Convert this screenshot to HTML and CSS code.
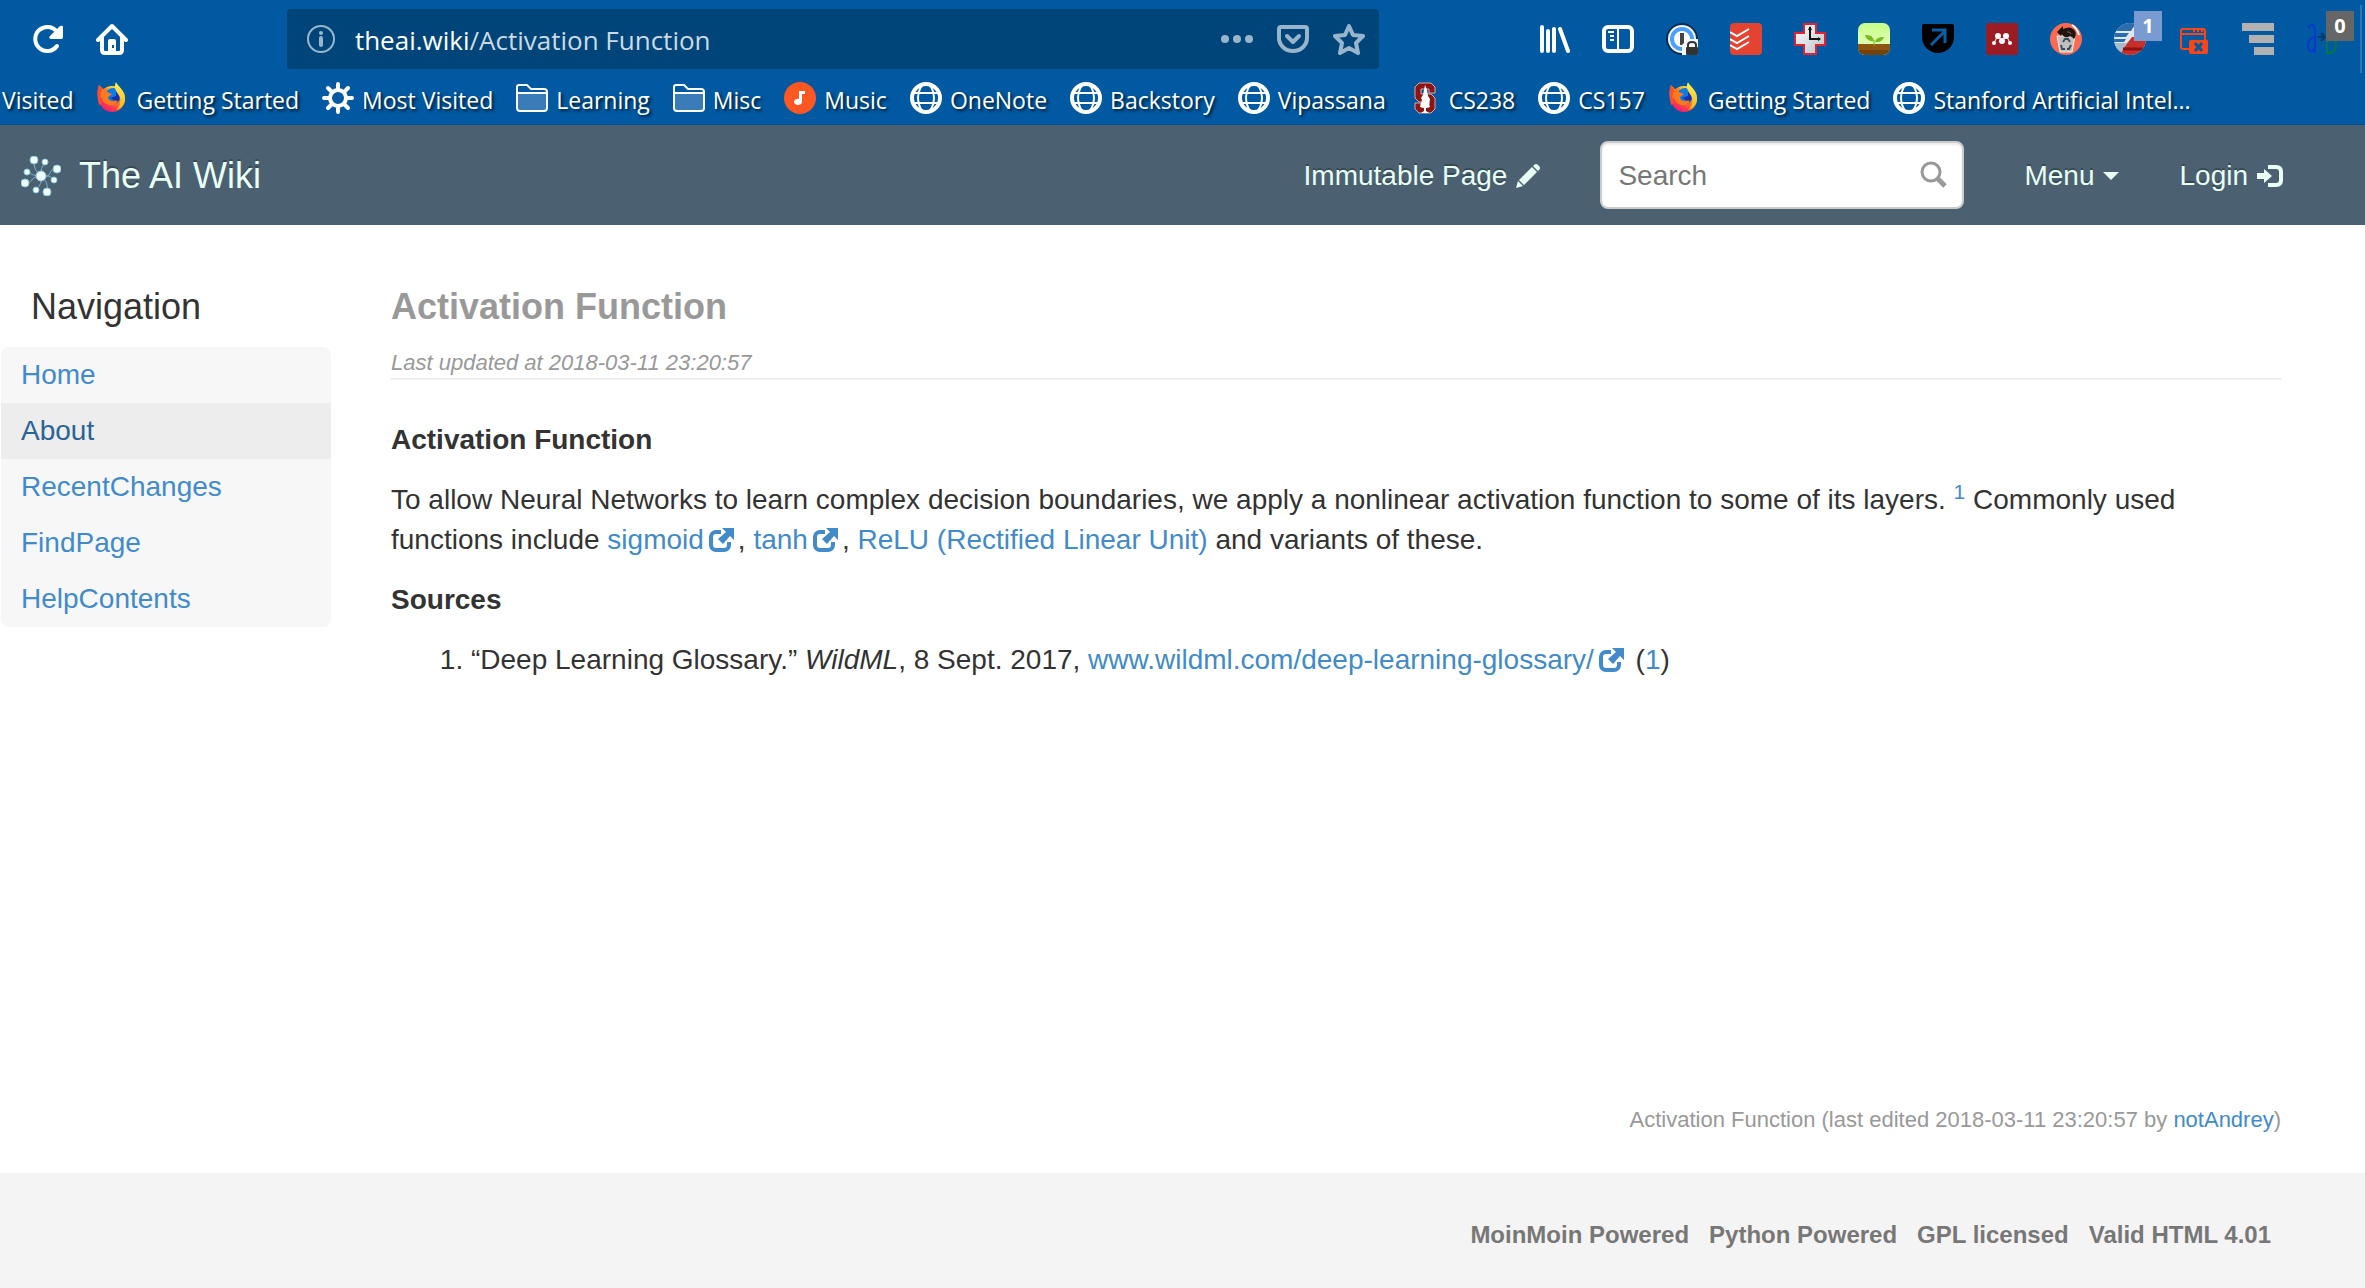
FILE: index.html
```html
<!DOCTYPE html>
<html lang="en">
<head>
<meta charset="utf-8">
<title>Activation Function - The AI Wiki</title>
<link rel="stylesheet" href="styles.css">
</head>
<body>
<svg class="defs" aria-hidden="true">
  <defs>
    <linearGradient id="fox" x1="0.8" y1="0" x2="0.2" y2="1">
      <stop offset="0" stop-color="#fff44f"/>
      <stop offset="0.4" stop-color="#ff980e"/>
      <stop offset="0.75" stop-color="#ff3750"/>
      <stop offset="1" stop-color="#e31587"/>
    </linearGradient>
    <linearGradient id="fox-tail" x1="0" y1="0" x2="0" y2="1">
      <stop offset="0" stop-color="#fff44f"/>
      <stop offset="1" stop-color="#ffb21c"/>
    </linearGradient>
    <linearGradient id="cross" x1="0" y1="0" x2="1" y2="1">
      <stop offset="0" stop-color="#ffffff"/>
      <stop offset="1" stop-color="#b9c0c8"/>
    </linearGradient>
    <linearGradient id="sky" x1="0" y1="0" x2="0" y2="1">
      <stop offset="0" stop-color="#c6ff8a"/>
      <stop offset="1" stop-color="#edffc4"/>
    </linearGradient>
    <clipPath id="round-tile"><rect width="32" height="32" rx="7"/></clipPath>
    <clipPath id="disc"><circle cx="16" cy="16" r="16"/></clipPath>
    <symbol id="i-globe" viewBox="0 0 32 32">
      <g fill="none" stroke="#fff">
        <circle cx="16" cy="16" r="14" stroke-width="4"/>
        <ellipse cx="16" cy="16" rx="8" ry="14" stroke-width="2"/>
        <path d="M4 11h24M4 21h24" stroke-width="2"/>
      </g>
    </symbol>
    <symbol id="i-folder" viewBox="0 0 32 32">
      <path d="M1 10h30v15a4 4 0 0 1-4 4H5a4 4 0 0 1-4-4z" fill="#3a7cb8"/>
      <path d="M1 10V5a2 2 0 0 1 2-2h8l4 4h13a3 3 0 0 1 3 3v16a3 3 0 0 1-3 3H4a3 3 0 0 1-3-3zM1 11h30" fill="none" stroke="#fff" stroke-width="2"/>
    </symbol>
    <symbol id="i-fox" viewBox="0 0 32 32">
      <circle cx="16" cy="17" r="13" fill="url(#fox)"/>
      <circle cx="17" cy="14" r="8" fill="#0a7bea"/>
      <path d="M20 8q6 6 2 12-6 4-10 0 5 0 6-2l-4-2 6-2z" fill="#1c2fa8"/>
      <path d="M3 3l4 4 5-1q-2 2-1 4l5 2-4 3q0 4 5 4 3-1 5 0-3 5-9 4-7-2-7-9L3 20Q0 11 3 3z" fill="#ff7a1a"/>
      <path d="M3 3q1 3 3 4-3 8 0 14l-3 2Q0 10 3 3z" fill="#ff4a36"/>
      <path d="M20 0c1 4 10 8 9 18-1 6-5 9-9 10 5-4 6-11 2-16-3-4-4-8-2-12z" fill="url(#fox-tail)"/>
    </symbol>
    <symbol id="i-external" viewBox="0 0 26 24">
      <path d="M12 4H7a5 5 0 0 0-5 5v8a5 5 0 0 0 5 5h8a5 5 0 0 0 5-5v-3" fill="none" stroke="#428bca" stroke-width="4"/>
      <path d="M13 0h12v12l-4-4-7 8-5-5 8-7z" fill="#428bca"/>
    </symbol>
  </defs>
</svg>

<div class="browser">
  <div class="toolbar">
    <button class="tool" aria-label="Reload">
      <svg width="32" height="32" viewBox="0 0 32 32"><path d="M25 23a12 12 0 1 1 0-14" fill="none" stroke="#fff" stroke-width="4" stroke-linecap="round"/><path d="M31 4v10q0 2-2 2H19q-3-1-1-3L28 3q3-1 3 1z" fill="#fff"/></svg>
    </button>
    <button class="tool" aria-label="Home">
      <svg width="32" height="32" viewBox="0 0 32 32"><path d="M2 17L16 3l14 14" fill="none" stroke="#fff" stroke-width="4" stroke-linecap="round" stroke-linejoin="round"/><path d="M6 14v13q0 3 3 3h14q3 0 3-3V14" fill="none" stroke="#fff" stroke-width="4"/><path d="M12 30V18q0-2 2-2h4q2 0 2 2v12z" fill="#fff"/><rect x="16" y="22" width="2" height="3" fill="#0059a1"/></svg>
    </button>
    <div class="spring"></div>
    <div class="urlbar">
      <svg width="30" height="30" viewBox="0 0 30 30"><circle cx="15" cy="15" r="13" fill="none" stroke="#99b5cc" stroke-width="2"/><circle cx="15" cy="9" r="2" fill="#99b5cc"/><path d="M15 14v7" stroke="#99b5cc" stroke-width="4" stroke-linecap="round"/></svg>
      <div class="address"><span class="host">theai.wiki</span>/Activation Function</div>
      <button class="tool" aria-label="Page actions">
        <svg width="32" height="32" viewBox="0 0 32 32" fill="#99b5cc"><circle cx="4" cy="16" r="4"/><circle cx="16" cy="16" r="4"/><circle cx="28" cy="16" r="4"/></svg>
      </button>
      <button class="tool" aria-label="Save to Pocket">
        <svg width="32" height="32" viewBox="0 0 32 32" fill="none" stroke="#99b5cc" stroke-width="4" stroke-linecap="round" stroke-linejoin="round"><path d="M4 4h24q2 0 2 2v9a14 13 0 0 1-28 0V6q0-2 2-2z"/><path d="M10 13l6 6 6-6"/></svg>
      </button>
      <button class="tool" aria-label="Bookmark this page">
        <svg width="32" height="32" viewBox="0 0 32 32" fill="none" stroke="#99b5cc" stroke-width="4" stroke-linejoin="round"><path d="M16 3l4 9 10 1-7 7 2 10-9-5-9 5 2-10-7-7 10-1z"/></svg>
      </button>
    </div>
    <div class="spring"></div>
    <div class="extensions">
      <button class="tool" aria-label="Library">
        <svg width="32" height="32" viewBox="0 0 32 32" stroke="#fff" stroke-width="4" stroke-linecap="round"><path d="M4 4v24M10 8v20M16 6v22M22 6l8 22"/></svg>
      </button>
      <button class="tool" aria-label="Sidebars">
        <svg width="32" height="32" viewBox="0 0 32 32" fill="none" stroke="#fff"><rect x="2" y="4" width="28" height="24" rx="4" stroke-width="4"/><path d="M16 4v24M6 9h6M8 13h4M8 17h4" stroke-width="2"/></svg>
      </button>
      <button class="tool" aria-label="Password manager">
        <svg width="32" height="32" viewBox="0 0 32 32"><circle cx="16" cy="16" r="16" fill="#0b2d54"/><circle cx="16" cy="16" r="14" fill="#f2f5f8"/><circle cx="16" cy="16" r="10" fill="#fff" stroke="#4ba0ff" stroke-width="4"/><rect x="14" y="10" width="4" height="12" fill="#444"/><path d="M16 22l6-6h10v16H16z" fill="#f2f5f8"/><rect x="20" y="24" width="12" height="8" rx="1" fill="#333"/><path d="M22 24v-2q0-3 4-3t4 3v2" fill="none" stroke="#333" stroke-width="2"/></svg>
      </button>
      <button class="tool" aria-label="Tasks">
        <svg width="32" height="32" viewBox="0 0 32 32"><rect width="32" height="32" rx="4" fill="#e44332"/><path d="M0 9l7 4 12-7M0 16l7 4 12-7M0 22l7 4 12-7" fill="none" stroke="#fff" stroke-width="2"/></svg>
      </button>
      <button class="tool" aria-label="Session history">
        <svg width="32" height="32" viewBox="0 0 32 32"><path d="M10 1h12v9h9v12h-9v9H10v-9H1V10h9z" fill="url(#cross)" stroke="#e0232e" stroke-width="2"/><path d="M16 4v12h10" fill="none" stroke="#111" stroke-width="2"/><path d="M14 7l2-4 2 4zM24 14l3 2-3 2z" fill="#111"/></svg>
      </button>
      <button class="tool" aria-label="Garden">
        <svg width="32" height="32" viewBox="0 0 32 32"><g clip-path="url(#round-tile)"><rect width="32" height="32" fill="url(#sky)"/><rect y="21" width="32" height="11" fill="#734206"/><rect y="21" width="32" height="6" fill="#8d5512"/></g><path d="M16 23v-6" stroke="#6db51c" stroke-width="1"/><path d="M16 18q-7 1-9-6 8-1 9 6zM17 19q1-5 9-5-2 6-9 5z" fill="#74bd1c"/></svg>
      </button>
      <button class="tool" aria-label="Shield">
        <svg width="32" height="32" viewBox="0 0 32 32"><path d="M2 1h28q2 0 2 2v11a16 16 0 0 1-32 0V3q0-2 2-2z" fill="#000"/><path d="M9 22L23 8M10 7h13v13" fill="none" stroke="#0b5da5" stroke-width="3"/></svg>
      </button>
      <button class="tool" aria-label="References">
        <svg width="32" height="32" viewBox="0 0 32 32"><rect width="32" height="32" rx="2" fill="#9d1b22"/><g fill="#fff"><circle cx="12" cy="13" r="3"/><circle cx="20" cy="13" r="3"/><circle cx="8" cy="20" r="2"/><circle cx="16" cy="18" r="3"/><circle cx="24" cy="20" r="2"/></g><path d="M8 20l3-6M24 20l-3-6M12 13l4 5 4-5" fill="none" stroke="#fff" stroke-width="1"/></svg>
      </button>
      <button class="tool" aria-label="Cleaner">
        <svg width="32" height="32" viewBox="0 0 32 32"><circle cx="16" cy="16" r="16" fill="#fb6a50"/><path d="M22 2q5 3 7 10" fill="none" stroke="#fff" stroke-width="2"/><path d="M7 13h18l-3 16H10z" fill="#c5c0bd" stroke="#eee"/><path d="M7 9l6-6v3q8-4 12 2 2 4-1 8-3-4-6-2-4 1-6-3l-1 2z" fill="#1d1512"/><path d="M17 9q3-1 4 2" fill="none" stroke="#a4503f"/><path d="M13 19l2-3h3l2 3M21 22l-2 4h-2M15 26h-3l-1-4" fill="none" stroke="#34505f" stroke-width="2"/></svg>
      </button>
      <button class="tool" aria-label="Blocked items, 1">
        <svg width="32" height="32" viewBox="0 0 32 32"><g clip-path="url(#disc)"><rect width="32" height="32" fill="#dfe7ee"/><path d="M0 0h22l-5 8H0zM0 10h15l-3 4H0zM0 16h12l-2 3H0z" fill="#2b6cab"/><path d="M18 14h14v18H4z" fill="#c62f2a"/><path d="M0 20h13L6 32H0z" fill="#a9bccb"/><path d="M9 26h22" stroke="#8c1512" stroke-width="3"/></g></svg>
        <span class="badge">1</span>
      </button>
      <button class="tool" aria-label="Close tabs">
        <svg width="32" height="32" viewBox="0 0 32 32"><path d="M11 26H5q-2 0-2-2V8q0-2 2-2h20q2 0 2 2v9M3 11h24" fill="none" stroke="#fa4616" stroke-width="2"/><path d="M15 8h2M19 8h2M23 8h2" stroke="#fa4616" stroke-width="2"/><path d="M13 17h16q1 0 1 1v11q0 2-2 2H13q-2 0-2-2V19q0-2 2-2z" fill="#fa4616"/><path d="M17 20l7 8M24 20l-7 8" stroke="#0059a1" stroke-width="3"/></svg>
      </button>
      <button class="tool" aria-label="Tree tabs">
        <svg width="32" height="32" viewBox="0 0 32 32" fill="#b1b1b1"><path d="M0 0h32v8H0zM7 12h25v8H7zM12 24h20v8H12z"/></svg>
      </button>
      <button class="tool" aria-label="Replace words, 0">
        <svg width="32" height="32" viewBox="0 0 32 32" fill="none"><path d="M2 5q5-7 7 2v23M9 14q-8 2-7 10 3 9 7 0" stroke="#0838d0" stroke-width="2"/><path d="M11 14h8M15 10l4 4-4 4" stroke="#063b6b" stroke-width="2"/><path d="M21 8v22h3q6-2 6-8t-5-6h-4" stroke="#077a3b" stroke-width="2"/></svg>
        <span class="badge badge-dark">0</span>
      </button>
    </div>
    <div class="divider"></div>
  </div>
  <nav class="bookmarks" aria-label="Bookmarks">
    <a href="#">Visited</a>
    <a href="#"><svg width="32" height="32"><use href="#i-fox"/></svg>Getting Started</a>
    <a href="#"><svg width="32" height="32" viewBox="0 0 32 32" fill="none" stroke="#fff"><circle cx="16" cy="16" r="8" stroke-width="4"/><path d="M16 2v5M16 25v5M2 16h5M25 16h5M6 6l4 4M22 22l4 4M6 26l4-4M22 10l4-4" stroke-width="4" stroke-linecap="round"/></svg>Most Visited</a>
    <a href="#"><svg width="32" height="32"><use href="#i-folder"/></svg>Learning</a>
    <a href="#"><svg width="32" height="32"><use href="#i-folder"/></svg>Misc</a>
    <a href="#"><svg width="32" height="32" viewBox="0 0 32 32"><circle cx="16" cy="16" r="16" fill="#ff5722"/><path d="M15 9h6v3h-3v8a4 3 0 1 1-3-3z" fill="#fff"/></svg>Music</a>
    <a href="#"><svg width="32" height="32"><use href="#i-globe"/></svg>OneNote</a>
    <a href="#"><svg width="32" height="32"><use href="#i-globe"/></svg>Backstory</a>
    <a href="#"><svg width="32" height="32"><use href="#i-globe"/></svg>Vipassana</a>
    <a href="#"><svg width="32" height="32" viewBox="0 0 32 32"><path d="M10 1h12l4 4v6h-6V7h-8v5h10l4 4v11l-4 4H10l-4-4v-6h6v4h8v-5H10l-4-4V5z" fill="#8c1515" stroke="#d9a9a9"/><path d="M16 3l2 5 1 6 2 3-1 6 1 2-4 1v3l3 2h-8l3-2v-3l-4-1 2-7-1-2 2-3z" fill="#fff"/></svg>CS238</a>
    <a href="#"><svg width="32" height="32"><use href="#i-globe"/></svg>CS157</a>
    <a href="#"><svg width="32" height="32"><use href="#i-fox"/></svg>Getting Started</a>
    <a href="#"><svg width="32" height="32"><use href="#i-globe"/></svg>Stanford Artificial Intel...</a>
  </nav>
</div>

<header class="site-header">
  <a class="brand" href="#">
    <svg width="40" height="40" viewBox="0 0 40 40"><g fill="none" stroke="#76b2cc" stroke-width="1"><path d="M20 20Q12 14 13 4M20 20q-1-8 4-14M20 20q8 2 9-3 1-4 7-4M20 20q-8 0-14-4M20 20q8-2 13 4M20 20Q13 20 11 24q-2 3-7 3M20 20q2 8-5 13M20 20q8 6 6 16"/></g><g fill="#effffb" stroke="#8cc8df" stroke-width="1"><circle cx="20" cy="20" r="5"/><circle cx="13" cy="4" r="4"/><circle cx="24" cy="6" r="3"/><circle cx="36" cy="13" r="4"/><circle cx="6" cy="16" r="3"/><circle cx="33" cy="24" r="3"/><circle cx="4" cy="27" r="4"/><circle cx="15" cy="34" r="3"/><circle cx="26" cy="36" r="4"/></g></svg>
    The AI Wiki
  </a>
  <div class="header-tools">
    <a class="header-link" href="#">Immutable Page
      <svg width="24" height="24" viewBox="0 0 24 24" fill="#e8fff4"><path d="M0 24l2-7 5 5zM3 16L16 3l5 5L8 21zM17 2l1-1q2-2 4 0l1 1q2 2 0 4l-1 1z"/></svg>
    </a>
    <form class="search">
      <input type="text" placeholder="Search" aria-label="Search">
      <button type="button" aria-label="Submit search">
        <svg width="28" height="28" viewBox="0 0 28 28" fill="none" stroke="#999"><circle cx="11" cy="11" r="9" stroke-width="3"/><path d="M17 17l8 8" stroke-width="5"/></svg>
      </button>
    </form>
    <button class="header-link">Menu
      <svg width="16" height="8" viewBox="0 0 16 8"><path d="M0 0h16L8 8z" fill="#e8fff4"/></svg>
    </button>
    <a class="header-link" href="#">Login
      <svg width="26" height="24" viewBox="0 0 26 24"><path d="M11 3h8q5 0 5 5v8q0 5-5 5h-8" fill="none" stroke="#e8fff4" stroke-width="4"/><path d="M0 9h7V5l8 7-8 7v-4H0z" fill="#e8fff4"/></svg>
    </a>
  </div>
</header>

<div class="page">
  <aside class="sidebar">
    <h2>Navigation</h2>
    <ul>
      <li><a href="#">Home</a></li>
      <li><a class="current" href="#">About</a></li>
      <li><a href="#">RecentChanges</a></li>
      <li><a href="#">FindPage</a></li>
      <li><a href="#">HelpContents</a></li>
    </ul>
  </aside>
  <main class="content">
    <div class="title">
      <h1>Activation Function</h1>
      <p>Last updated at 2018-03-11 23:20:57</p>
    </div>
    <article>
      <h3>Activation Function</h3>
      <p>To allow Neural Networks to learn complex decision boundaries, we apply a nonlinear activation function to some of its layers. <sup><a href="#">1</a></sup> Commonly used functions include <a href="#">sigmoid<svg class="ext" width="26" height="24"><use href="#i-external"/></svg></a>, <a href="#">tanh<svg class="ext" width="26" height="24"><use href="#i-external"/></svg></a>, <a href="#">ReLU (Rectified Linear Unit)</a> and variants of these.</p>
      <h3>Sources</h3>
      <ol>
        <li>“Deep Learning Glossary.” <em>WildML</em>, 8 Sept. 2017, <a href="#">www.wildml.com/deep-learning-glossary/<svg class="ext" width="26" height="24"><use href="#i-external"/></svg></a> (<a href="#">1</a>)</li>
      </ol>
    </article>
    <p class="edited">Activation Function (last edited 2018-03-11 23:20:57 by <a href="#">notAndrey</a>)</p>
  </main>
</div>

<footer class="site-footer">
  <a href="#">MoinMoin Powered</a>
  <a href="#">Python Powered</a>
  <a href="#">GPL licensed</a>
  <a href="#">Valid HTML 4.01</a>
</footer>
</body>
</html>
```
FILE: styles.css
```css
* { box-sizing: border-box; }

body {
  margin: 0;
  min-height: 100vh;
  display: flex;
  flex-direction: column;
  background: #fff;
  color: #333;
  font: 28px/40px "Liberation Sans", Arial, sans-serif;
}

h1, h2, h3, p, ul, ol { margin: 0; }
a { color: #428bca; text-decoration: none; }
svg { flex: none; }
button { border: 0; padding: 0; background: none; font: inherit; }
.defs { position: absolute; width: 0; height: 0; }

/* Browser chrome */
.browser {
  background: #0059a1;
  border-bottom: 1px solid #00508f;
  font-family: "Open Sans", "Noto Sans", sans-serif;
  font-size: 23px;
}
.toolbar {
  display: flex;
  align-items: center;
  gap: 32px;
  height: 78px;
  padding: 0 3px 0 32px;
}
.tool { position: relative; display: flex; }
.spring { flex: 3; margin: 0 -32px; }
.urlbar {
  flex: 20;
  display: flex;
  align-items: center;
  gap: 24px;
  height: 60px;
  padding: 0 14px 0 19px;
  border-radius: 4px;
  background: #004579;
}
.address { flex: 1; margin-left: -5px; padding-top: 2px; color: #ccdae4; font-size: 26px; white-space: nowrap; }
.host { color: #fff; }
.extensions { display: flex; gap: 32px; }
.divider { width: 2px; height: 68px; margin-left: -10px; background: #2e77b2; }
.badge {
  position: absolute;
  top: -12px;
  left: 20px;
  width: 28px;
  height: 30px;
  background: #7a9bd1;
  color: #fff;
  font-size: 20px;
  font-weight: 700;
  line-height: 30px;
  text-align: center;
}
.badge-dark { background: #666; }
.bookmarks {
  display: flex;
  gap: 23px;
  height: 46px;
  padding: 4px 0 0 2px;
  overflow: hidden;
  white-space: nowrap;
}
.bookmarks a {
  display: flex;
  align-items: flex-start;
  gap: 8px;
  color: #fff;
  line-height: 36px;
  text-shadow: 2px 2px 3px rgba(0, 0, 0, 0.7);
}

/* Site header */
.site-header {
  display: flex;
  align-items: center;
  justify-content: space-between;
  height: 100px;
  padding: 0 82px 0 21px;
  background: #4b6172;
}
.brand, .header-link {
  display: flex;
  align-items: center;
  padding-top: 2px;
  color: #e8fff4;
  text-shadow: 0 -2px 0 rgba(0, 0, 0, 0.25);
}
.brand { gap: 18px; font-size: 36px; }
.header-link { gap: 9px; }
.header-tools { display: flex; align-items: center; gap: 60px; }
.search {
  display: flex;
  align-items: center;
  width: 364px;
  height: 68px;
  padding: 0 14px 0 16px;
  border: 2px solid #ccc;
  border-radius: 8px;
  background: #fff;
  box-shadow: inset 0 2px 2px rgba(0, 0, 0, 0.08);
}
.search input {
  flex: 1;
  min-width: 0;
  padding: 2px 0 0;
  border: 0;
  outline: 0;
  background: none;
  color: #333;
  font: inherit;
}
.search input::placeholder { color: #777; opacity: 1; }
.search button { display: flex; }

/* Page body */
.page { flex: 1; display: flex; gap: 60px; padding: 62px 84px 0 1px; }
.sidebar { width: 330px; }
.sidebar h2 {
  padding-left: 30px;
  font-size: 36px;
  font-weight: 400;
  line-height: 40px;
}
.sidebar ul {
  margin-top: 20px;
  padding: 0;
  border-radius: 8px;
  background: #f7f7f7;
  list-style: none;
  overflow: hidden;
}
.sidebar li a { display: block; padding: 8px 20px; }
.sidebar .current { background: #ededed; color: #2a6496; }

.content { flex: 1; display: flex; flex-direction: column; }
.title { border-bottom: 2px solid #eee; color: #999; }
.title h1 { font-size: 36px; line-height: 40px; }
.title p { padding-top: 20px; font-size: 22px; font-style: italic; line-height: 31px; }
article { padding-top: 40px; }
article h3 { font-size: 28px; line-height: 40px; }
article p, article ol { margin: 20px 0; }
article ol { padding-left: 80px; }
sup { font-size: 21px; line-height: 0; position: relative; top: -10px; vertical-align: baseline; }
.ext { margin: 0 3px 0 5px; vertical-align: -3px; }
.edited {
  margin-top: auto;
  padding-bottom: 33px;
  color: #999;
  font-size: 22px;
  text-align: right;
}

.site-footer {
  display: flex;
  justify-content: flex-end;
  gap: 20px;
  padding: 42px 94px 33px;
  background: #f4f4f4;
  font-size: 24px;
  font-weight: 700;
}
.site-footer a { color: #777; }
```
